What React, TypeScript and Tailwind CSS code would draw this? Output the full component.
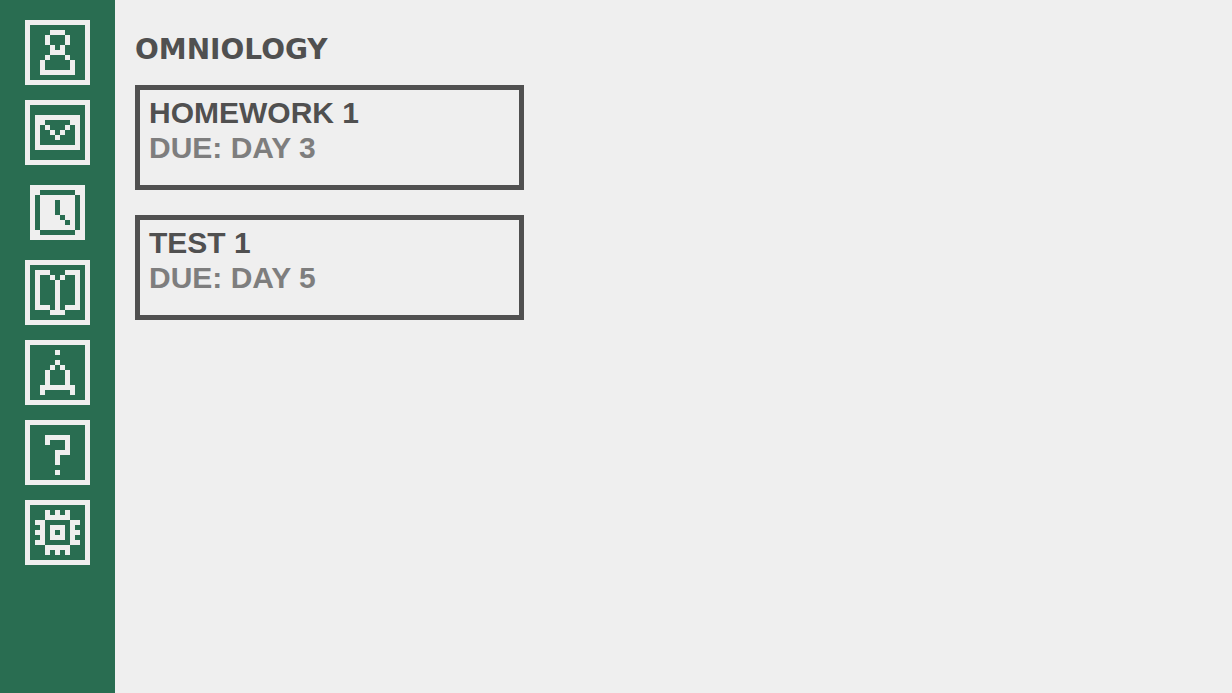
import { useState } from "react";

type Icon = { label: string; rows: string[] };

const icons: Icon[] = [
  {
    label: "Profile",
    rows: [
      "...........",
      "....###....",
      "...#...#...",
      "...#...#...",
      "....#.#....",
      "....###....",
      "...#...#...",
      "..#.....#..",
      "..#.....#..",
      "..#######..",
      "...........",
    ],
  },
  {
    label: "Mail",
    rows: [
      "...........",
      "...........",
      ".#########.",
      ".##.....##.",
      ".#.#...#.#.",
      ".#..#.#..#.",
      ".#...#...#.",
      ".#.......#.",
      ".#########.",
      "...........",
      "...........",
    ],
  },
  {
    label: "Schedule",
    rows: [
      "...........",
      "..#######..",
      ".#.......#.",
      ".#...#...#.",
      ".#...#...#.",
      ".#...#...#.",
      ".#....#..#.",
      ".#.....#.#.",
      ".#.......#.",
      "..#######..",
      "...........",
    ],
  },
  {
    label: "Library",
    rows: [
      "...........",
      ".###...###.",
      ".#..#.#..#.",
      ".#...#...#.",
      ".#...#...#.",
      ".#...#...#.",
      ".#...#...#.",
      ".#...#...#.",
      ".###.#.###.",
      "....###....",
      "...........",
    ],
  },
  {
    label: "Notifications",
    rows: [
      "...........",
      ".....#.....",
      "...........",
      ".....#.....",
      "....#.#....",
      "...#...#...",
      "...#...#...",
      "...#...#...",
      "..#######..",
      "..#.....#..",
      "...........",
    ],
  },
  {
    label: "Help",
    rows: [
      "...........",
      "...........",
      "...#####...",
      "...#...#...",
      ".......#...",
      ".....###...",
      ".....#.....",
      ".....#.....",
      "...........",
      ".....#.....",
      "...........",
    ],
  },
  {
    label: "Settings",
    rows: [
      "...........",
      "...#.#.#...",
      "...#####...",
      ".##.....##.",
      "..#.###.#..",
      ".##.#.#.##.",
      "..#.###.#..",
      ".##.....##.",
      "...#####...",
      "...#.#.#...",
      "...........",
    ],
  },
];

const assignments = [
  { title: "HOMEWORK 1", due: "DUE: DAY 3" },
  { title: "TEST 1", due: "DUE: DAY 5" },
];

function PixelIcon({ rows }: { rows: string[] }) {
  return (
    <svg viewBox="0 0 11 11" className="size-full" fill="currentColor" shapeRendering="crispEdges" aria-hidden="true">
      {rows.flatMap((row, y) =>
        [...row].map((cell, x) => (cell === "#" ? <rect key={`${x}-${y}`} x={x} y={y} width="1" height="1" /> : null)),
      )}
    </svg>
  );
}

export default function App() {
  const [active, setActive] = useState("Schedule");

  return (
    <div className="flex min-h-screen bg-[#efefef] font-['Liberation_Sans',sans-serif] font-bold text-[#505050]">
      <nav aria-label="Main" className="flex w-[115px] shrink-0 flex-col items-center gap-[15px] bg-[#296d51] py-5">
        {icons.map(({ label, rows }) => (
          <button
            key={label}
            type="button"
            aria-label={label}
            aria-pressed={active === label}
            onClick={() => setActive(label)}
            className={
              active === label
                ? "size-[65px] border-5 border-[#296d51] bg-[#efefef] text-[#296d51]"
                : "size-[65px] border-5 border-[#efefef] text-[#efefef]"
            }
          >
            <PixelIcon rows={rows} />
          </button>
        ))}
      </nav>
      <main className="flex-1 p-5">
        <h1 className="font-['DejaVu_Sans',sans-serif] text-[28px] leading-[60px]">OMNIOLOGY</h1>
        <ul className="mt-[5px] flex max-w-[389px] flex-col gap-[25px]">
          {assignments.map(({ title, due }) => (
            <li key={title} className="border-5 border-[#505050] px-[9px] pt-[5px] pb-5 text-[30px] leading-[35px]">
              <h2>{title}</h2>
              <p className="text-[#7e7e7e]">{due}</p>
            </li>
          ))}
        </ul>
      </main>
    </div>
  );
}
